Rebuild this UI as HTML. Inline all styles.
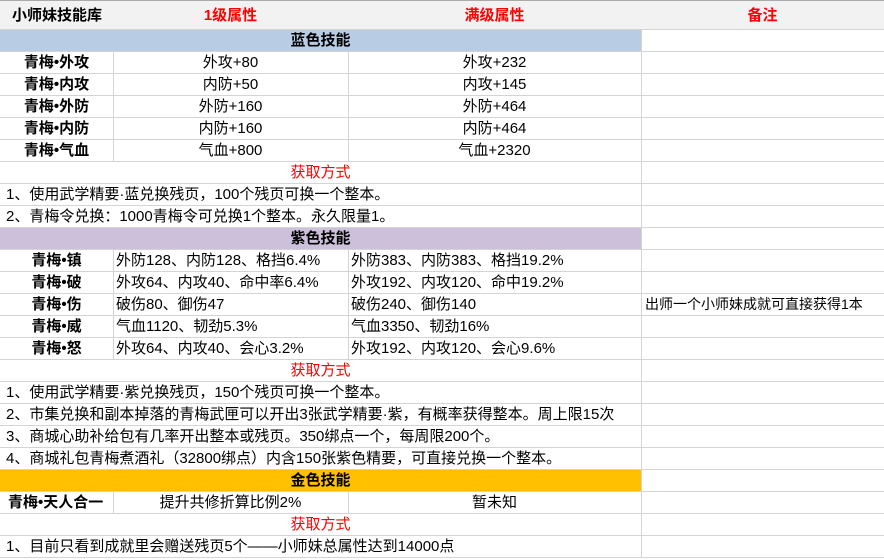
<!DOCTYPE html><html><head><meta charset="utf-8"><style>
*{margin:0;padding:0;box-sizing:border-box}
body{width:884px;height:560px;background:#fff;position:relative;overflow:hidden;font-family:"Liberation Sans","Noto Sans CJK SC",sans-serif;font-size:15px;color:#000}
.r{position:absolute;left:0;width:884px;height:22px;border-bottom:1px solid #d4d4d4;line-height:21px}
.c{position:absolute;top:0;height:21px;white-space:nowrap;overflow:visible}
.b{font-weight:bold}
.red{color:#f00}
.vl{position:absolute;top:0;height:22px;border-left:1px solid #d4d4d4}
</style></head><body>
<div class="r" style="top:0;height:30px;background:#f2f2f2;line-height:30px;border-top:1px solid #aaa">
<div class="c b" style="left:12px;height:30px">小师妹技能库</div>
<div class="c b red" style="left:113px;width:235px;text-align:center;height:30px">1级属性</div>
<div class="c b red" style="left:348px;width:293px;text-align:center;height:30px">满级属性</div>
<div class="c b red" style="left:641px;width:243px;text-align:center;height:30px">备注</div>
</div>
<div class="r" style="top:30px"><div style="position:absolute;left:0;width:641px;height:21px;background:#b8cce4"></div><div class="c b" style="left:0;width:641px;text-align:center">蓝色技能</div><div class="vl" style="left:641px"></div></div>

<div class="r" style="top:52px"><div class="c b" style="left:0;width:113px;text-align:center">青梅•外攻</div><div class="vl" style="left:113px"></div><div class="c" style="left:113px;width:235px;text-align:center">外攻+80</div><div class="vl" style="left:348px"></div><div class="c" style="left:348px;width:293px;text-align:center">外攻+232</div><div class="vl" style="left:641px"></div></div>
<div class="r" style="top:74px"><div class="c b" style="left:0;width:113px;text-align:center">青梅•内攻</div><div class="vl" style="left:113px"></div><div class="c" style="left:113px;width:235px;text-align:center">内防+50</div><div class="vl" style="left:348px"></div><div class="c" style="left:348px;width:293px;text-align:center">内攻+145</div><div class="vl" style="left:641px"></div></div>
<div class="r" style="top:96px"><div class="c b" style="left:0;width:113px;text-align:center">青梅•外防</div><div class="vl" style="left:113px"></div><div class="c" style="left:113px;width:235px;text-align:center">外防+160</div><div class="vl" style="left:348px"></div><div class="c" style="left:348px;width:293px;text-align:center">外防+464</div><div class="vl" style="left:641px"></div></div>
<div class="r" style="top:118px"><div class="c b" style="left:0;width:113px;text-align:center">青梅•内防</div><div class="vl" style="left:113px"></div><div class="c" style="left:113px;width:235px;text-align:center">内防+160</div><div class="vl" style="left:348px"></div><div class="c" style="left:348px;width:293px;text-align:center">内防+464</div><div class="vl" style="left:641px"></div></div>
<div class="r" style="top:140px"><div class="c b" style="left:0;width:113px;text-align:center">青梅•气血</div><div class="vl" style="left:113px"></div><div class="c" style="left:113px;width:235px;text-align:center">气血+800</div><div class="vl" style="left:348px"></div><div class="c" style="left:348px;width:293px;text-align:center">气血+2320</div><div class="vl" style="left:641px"></div></div>
<div class="r" style="top:162px"><div class="c red" style="left:0;width:641px;text-align:center">获取方式</div><div class="vl" style="left:641px"></div></div>
<div class="r" style="top:184px"><div class="c" style="left:6px">1、使用武学精要·蓝兑换残页，100个残页可换一个整本。</div><div class="vl" style="left:641px"></div></div>
<div class="r" style="top:206px"><div class="c" style="left:6px">2、青梅令兑换：1000青梅令可兑换1个整本。永久限量1。</div><div class="vl" style="left:641px"></div></div>
<div class="r" style="top:228px"><div style="position:absolute;left:0;width:641px;height:21px;background:#ccc0da"></div><div class="c b" style="left:0;width:641px;text-align:center">紫色技能</div><div class="vl" style="left:641px"></div></div>

<div class="r" style="top:250px"><div class="c b" style="left:0;width:113px;text-align:center">青梅•镇</div><div class="vl" style="left:113px"></div><div class="c" style="left:116px">外防128、内防128、格挡6.4%</div><div class="vl" style="left:348px"></div><div class="c" style="left:351px">外防383、内防383、格挡19.2%</div><div class="vl" style="left:641px"></div></div>
<div class="r" style="top:272px"><div class="c b" style="left:0;width:113px;text-align:center">青梅•破</div><div class="vl" style="left:113px"></div><div class="c" style="left:116px">外攻64、内攻40、命中率6.4%</div><div class="vl" style="left:348px"></div><div class="c" style="left:351px">外攻192、内攻120、命中19.2%</div><div class="vl" style="left:641px"></div></div>
<div class="r" style="top:294px"><div class="c b" style="left:0;width:113px;text-align:center">青梅•伤</div><div class="vl" style="left:113px"></div><div class="c" style="left:116px">破伤80、御伤47</div><div class="vl" style="left:348px"></div><div class="c" style="left:351px">破伤240、御伤140</div><div class="vl" style="left:641px"></div><div class="c" style="left:645px;font-size:14px">出师一个小师妹成就可直接获得1本</div></div>
<div class="r" style="top:316px"><div class="c b" style="left:0;width:113px;text-align:center">青梅•威</div><div class="vl" style="left:113px"></div><div class="c" style="left:116px">气血1120、韧劲5.3%</div><div class="vl" style="left:348px"></div><div class="c" style="left:351px">气血3350、韧劲16%</div><div class="vl" style="left:641px"></div></div>
<div class="r" style="top:338px"><div class="c b" style="left:0;width:113px;text-align:center">青梅•怒</div><div class="vl" style="left:113px"></div><div class="c" style="left:116px">外攻64、内攻40、会心3.2%</div><div class="vl" style="left:348px"></div><div class="c" style="left:351px">外攻192、内攻120、会心9.6%</div><div class="vl" style="left:641px"></div></div>
<div class="r" style="top:360px"><div class="c red" style="left:0;width:641px;text-align:center">获取方式</div><div class="vl" style="left:641px"></div></div>
<div class="r" style="top:382px"><div class="c" style="left:6px">1、使用武学精要·紫兑换残页，150个残页可换一个整本。</div><div class="vl" style="left:641px"></div></div>
<div class="r" style="top:404px"><div class="c" style="left:6px">2、市集兑换和副本掉落的青梅武匣可以开出3张武学精要·紫，有概率获得整本。周上限15次</div><div class="vl" style="left:641px"></div></div>
<div class="r" style="top:426px"><div class="c" style="left:6px">3、商城心助补给包有几率开出整本或残页。350绑点一个，每周限200个。</div><div class="vl" style="left:641px"></div></div>
<div class="r" style="top:448px"><div class="c" style="left:6px">4、商城礼包青梅煮酒礼（32800绑点）内含150张紫色精要，可直接兑换一个整本。</div><div class="vl" style="left:641px"></div></div>
<div class="r" style="top:470px"><div style="position:absolute;left:0;width:641px;height:21px;background:#ffc000"></div><div class="c b" style="left:0;width:641px;text-align:center">金色技能</div><div class="vl" style="left:641px"></div></div>
<div class="r" style="top:492px"><div class="c b" style="left:8px">青梅•天人合一</div><div class="vl" style="left:113px"></div><div class="c" style="left:113px;width:235px;text-align:center">提升共修折算比例2%</div><div class="vl" style="left:348px"></div><div class="c" style="left:348px;width:293px;text-align:center">暂未知</div><div class="vl" style="left:641px"></div></div>
<div class="r" style="top:514px"><div class="c red" style="left:0;width:641px;text-align:center">获取方式</div><div class="vl" style="left:641px"></div></div>
<div class="r" style="top:536px"><div class="c" style="left:6px">1、目前只看到成就里会赠送残页5个——小师妹总属性达到14000点</div><div class="vl" style="left:641px"></div></div>
</body></html>
